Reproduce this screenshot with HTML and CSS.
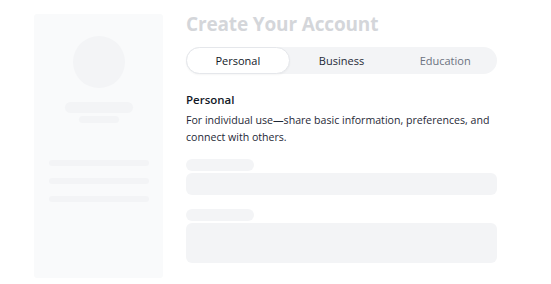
FILE: index.html
```html
<!DOCTYPE html>
<html>
<head>
<meta charset="utf-8">
<link rel="stylesheet" href="styles.css">
</head>
<body>
<div class="page">
  <aside class="card">
    <div class="avatar"></div>
    <div class="sk name"></div>
    <div class="sk sub"></div>
    <div class="lines">
      <div class="sk line"></div>
      <div class="sk line"></div>
      <div class="sk line"></div>
    </div>
  </aside>
  <main class="main">
    <h1 class="title">Create Your Account</h1>
    <div class="tabs">
      <div class="tab active">Personal</div>
      <div class="tab">Business</div>
      <div class="tab muted">Education</div>
    </div>
    <h2 class="heading">Personal</h2>
    <p class="desc">For individual use—share basic information, preferences, and connect with others.</p>
    <div class="field">
      <div class="sk label"></div>
      <div class="sk input"></div>
    </div>
    <div class="field">
      <div class="sk label"></div>
      <div class="sk input tall"></div>
    </div>
  </main>
</div>
</body>
</html>
```
FILE: styles.css
```css
* { box-sizing: border-box; }
html, body { margin: 0; background: #fff; }
body { font-family: "Open Sans", "Noto Sans", sans-serif; color: #111827; }
.page { display: flex; gap: 23px; padding: 14px 0 0 34px; }
.card {
  width: 129px; height: 264px; background: #f9fafb; border-radius: 3px;
  display: flex; flex-direction: column; align-items: center; padding-top: 22px;
}
.sk { background: #f3f4f6; border-radius: 6px; }
.avatar { width: 52px; height: 52px; border-radius: 50%; background: #f3f4f6; }
.name { width: 68px; height: 11px; margin-top: 14px; }
.sub { width: 40px; height: 7px; margin-top: 3px; border-radius: 4px; }
.lines { display: flex; flex-direction: column; gap: 12px; margin-top: 37px; }
.line { width: 100px; height: 6px; border-radius: 3px; }
.main { width: 311px; display: flex; flex-direction: column; }
.title { margin: 0; font-size: 19px; line-height: 20px; font-weight: 700; color: #d4d6da; letter-spacing: -0.15px; }
.tabs {
  margin-top: 13px; height: 27px; background: #f3f4f6; border-radius: 14px;
  display: grid; grid-template-columns: 1fr 1fr 1fr;
}
.tab { display: flex; align-items: center; justify-content: center; font-size: 11px; color: #1f2937; border-radius: 14px; }
.tab.active { background: #fff; border: 1px solid #e5e7eb; color: #111827; box-shadow: 0 1px 2px rgba(0,0,0,0.04); }
.tab.muted { color: #6b7280; }
.heading { margin: 18px 0 0; font-size: 11.5px; line-height: 16px; font-weight: 600; color: #111827; }
.desc { margin: 4px 0 0; font-size: 10.6px; line-height: 17px; color: #1f2937; }
.field { display: flex; flex-direction: column; gap: 2px; margin-top: 13px; }
.field + .field { margin-top: 14px; }
.label { width: 68px; height: 12px; }
.input { height: 22px; }
.input.tall { height: 40px; }
```
